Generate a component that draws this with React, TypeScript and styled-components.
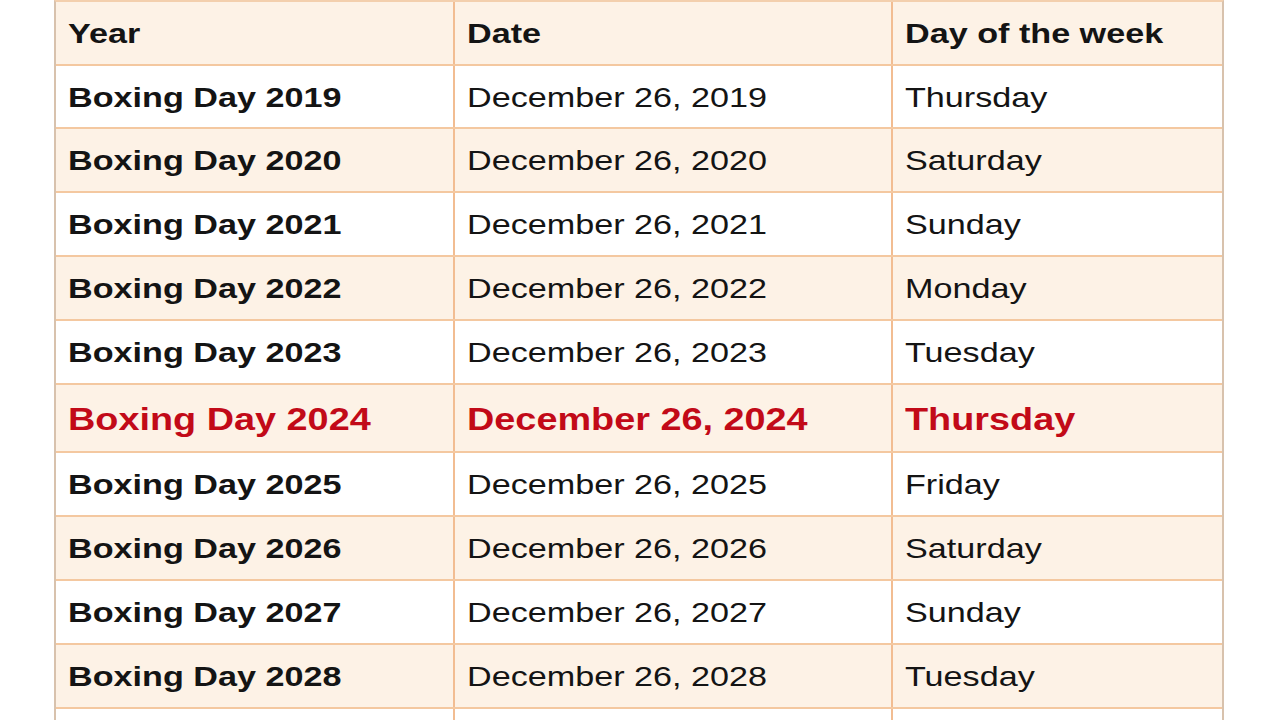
import React from "react";
import styled, { createGlobalStyle } from "styled-components";

const Global = createGlobalStyle`
  html, body { margin: 0; padding: 0; background: #ffffff; }
  body { font-family: "Liberation Sans", Arial, sans-serif; overflow: hidden; }
`;

const Page = styled.div`
  width: 1279px;
  height: 720px;
  overflow: hidden;
  background: #ffffff;
  padding-left: 54px;
  box-sizing: border-box;
`;

const Table = styled.div`
  width: 1170px;
  display: flex;
  flex-direction: column;
  border-left: 2px solid #d8c2ad;
  border-right: 2px solid #d8c2ad;
  border-top: 2px solid #f3cfad;
  box-sizing: border-box;
`;

const Row = styled.div<{ $h: number; $shade: boolean }>`
  display: grid;
  grid-template-columns: 399px 438px 1fr;
  height: ${(p) => p.$h}px;
  flex: none;
  background: ${(p) => (p.$shade ? "#fdf2e6" : "#ffffff")};
  border-bottom: 2px solid #f4c8a0;
  box-sizing: border-box;
`;

const Cell = styled.div<{ $last?: boolean }>`
  display: flex;
  align-items: center;
  padding: 2px 0 0 12px;
  border-right: ${(p) => (p.$last ? "none" : "2px solid #f2bd92")};
  overflow: visible;
  white-space: nowrap;
`;

const Text = styled.span<{ $bold?: boolean; $hot?: boolean }>`
  display: inline-block;
  font-family: "Liberation Sans", Arial, sans-serif;
  font-size: ${(p) => (p.$hot ? 31 : 28)}px;
  font-weight: ${(p) => (p.$bold || p.$hot ? 700 : 400)};
  color: ${(p) => (p.$hot ? "#c20a18" : "#141414")};
  transform: scaleX(1.22);
  transform-origin: left center;
  line-height: 1;
`;

const rows = [
  ["2019", "Thursday"],
  ["2020", "Saturday"],
  ["2021", "Sunday"],
  ["2022", "Monday"],
  ["2023", "Tuesday"],
  ["2024", "Thursday"],
  ["2025", "Friday"],
  ["2026", "Saturday"],
  ["2027", "Sunday"],
  ["2028", "Tuesday"],
];

export default function App() {
  return (
    <>
      <Global />
      <Page>
        <Table>
          <Row $h={64} $shade>
            <Cell><Text $bold>Year</Text></Cell>
            <Cell><Text $bold>Date</Text></Cell>
            <Cell $last><Text $bold>Day of the week</Text></Cell>
          </Row>
          {rows.map(([year, day], i) => {
            const hot = year === "2024";
            const h = i === 0 ? 63 : hot ? 68 : 64;
            return (
              <Row key={year} $h={h} $shade={i % 2 === 1}>
                <Cell><Text $bold $hot={hot}>Boxing Day {year}</Text></Cell>
                <Cell><Text $hot={hot}>December 26, {year}</Text></Cell>
                <Cell $last><Text $hot={hot}>{day}</Text></Cell>
              </Row>
            );
          })}
          <Row $h={64} $shade={false}>
            <Cell />
            <Cell />
            <Cell $last />
          </Row>
        </Table>
      </Page>
    </>
  );
}
